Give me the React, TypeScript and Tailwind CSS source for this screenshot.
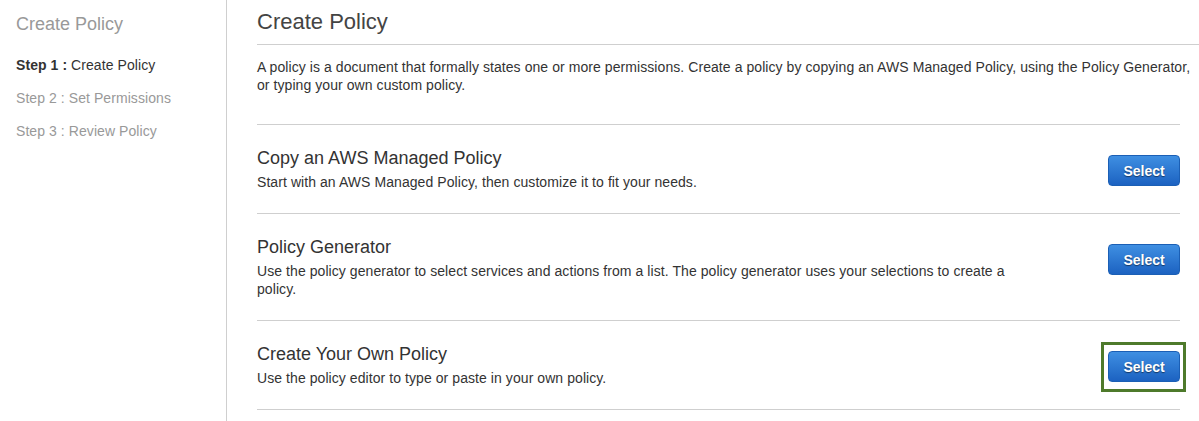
const options = [
  {
    title: "Copy an AWS Managed Policy",
    text: "Start with an AWS Managed Policy, then customize it to fit your needs.",
  },
  {
    title: "Policy Generator",
    text: "Use the policy generator to select services and actions from a list. The policy generator uses your selections to create a policy.",
  },
  {
    title: "Create Your Own Policy",
    text: "Use the policy editor to type or paste in your own policy.",
    highlight: true,
  },
];

function SelectButton({ highlight }: { highlight?: boolean }) {
  return (
    <div className="relative mt-2 shrink-0">
      {highlight && (
        <span className="absolute -left-[7px] -right-[6px] -top-[9px] -bottom-[10px] border-[3px] border-[#4e7a2b]" />
      )}
      <button className="relative w-[72px] h-[31px] pt-px rounded-[4px] border border-[#1b5fb5] bg-gradient-to-b from-[#3f8fe2] to-[#1c62c1] text-white text-[14px] font-bold [text-shadow:0_1px_1px_rgba(0,0,0,0.5)]">
        Select
      </button>
    </div>
  );
}

export default function App() {
  return (
    <div className="flex min-h-[421px] bg-white text-[#333] font-['Liberation_Sans',Arial,sans-serif]">
      {/* Sidebar */}
      <div className="w-[227px] shrink-0 border-r border-[#cfcfcf] pl-4 pt-[13px]">
        <h2 className="text-[18px] leading-[22px] text-[#999]">Create Policy</h2>
        <ul className="mt-[21px] flex flex-col gap-[15px] text-[14px] leading-[18px] tracking-[0.07px]">
          <li className="text-[#333]">
            <span className="font-bold">Step 1 :</span> Create Policy
          </li>
          <li className="text-[#999]">Step 2 : Set Permissions</li>
          <li className="text-[#999]">Step 3 : Review Policy</li>
        </ul>
      </div>

      {/* Main */}
      <div className="flex-1 pl-[30px]">
        <h1 className="pt-[9px] pb-[9px] text-[22px] leading-[26px] text-[#444] border-b border-[#cfcfcf]">
          Create Policy
        </h1>
        <div className="pr-[19px]">
          <div className="border-b border-[#cfcfcf] pb-[30px]">
            <p className="mt-[13px] -mr-[19px] text-[14px] leading-[18px] tracking-[0.07px]">
              A policy is a document that formally states one or more permissions. Create a policy by copying an AWS Managed Policy, using the Policy Generator, or typing your own custom policy.
            </p>
          </div>
          {options.map((o) => (
            <div key={o.title} className="flex items-start justify-between py-[22px] border-b border-[#cfcfcf]">
              <div className="w-[775px]">
                <h3 className="text-[18px] leading-[22px] text-[#333]">{o.title}</h3>
                <p className="mt-[4px] text-[14px] leading-[18px] tracking-[0.07px] text-[#333]">{o.text}</p>
              </div>
              <SelectButton highlight={o.highlight} />
            </div>
          ))}
        </div>
      </div>
    </div>
  );
}
